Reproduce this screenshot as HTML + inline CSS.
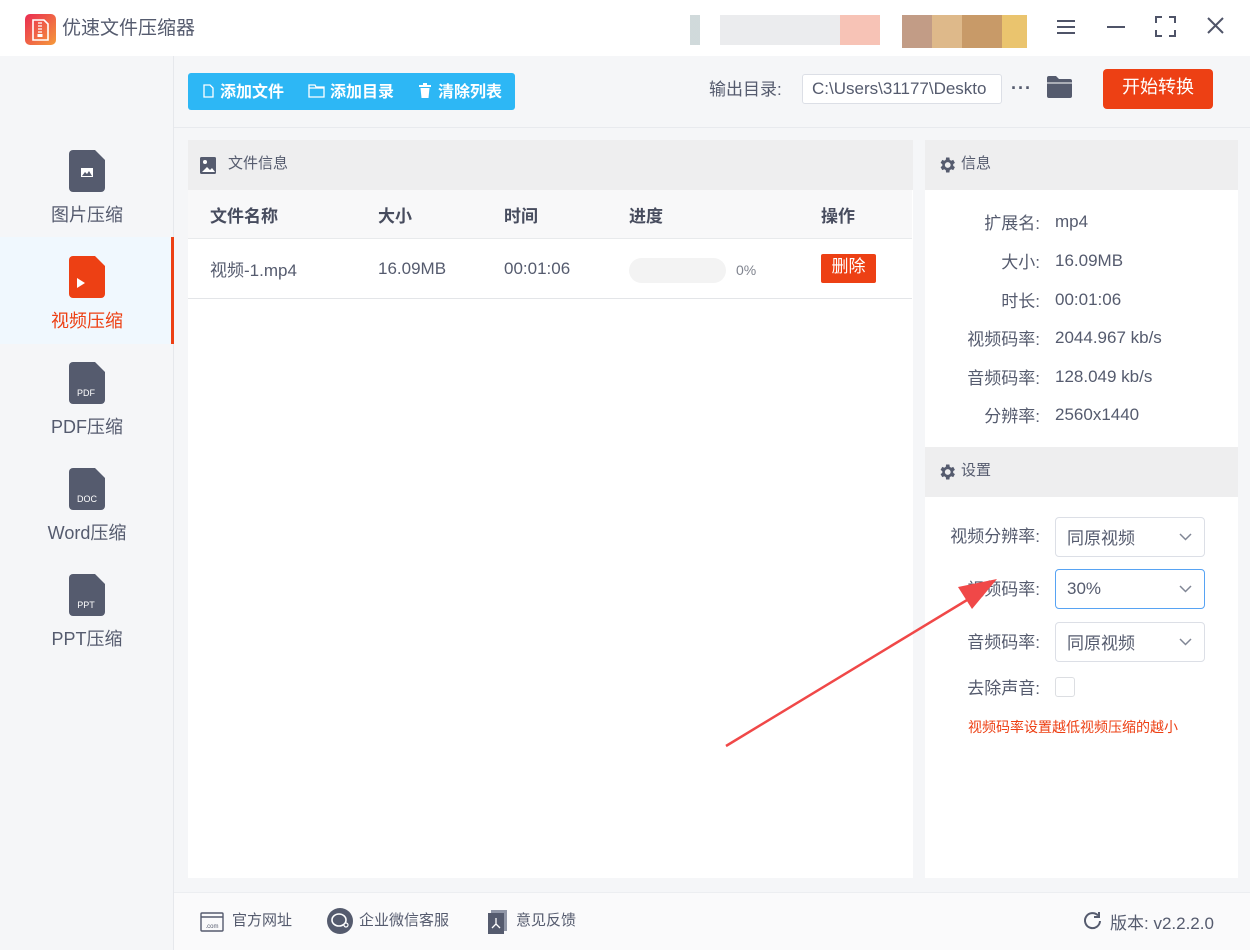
<!DOCTYPE html>
<html><head><meta charset="utf-8"><style>
*{margin:0;padding:0;box-sizing:border-box}
body{width:1250px;height:950px;position:relative;background:#f5f6f8;font-family:"Liberation Sans","Noto Sans CJK SC",sans-serif;color:#555b6e;overflow:hidden}
.a{position:absolute}
.t{font-size:17px;white-space:nowrap}
.c{margin-top:-3px}
.side .lbl{position:absolute;width:174px;text-align:center;font-size:18px;color:#555b6e;margin-top:-1px}
.fi{position:absolute;left:69px;width:36px;height:42px}
.lab{position:absolute;font-size:17px;text-align:right;width:120px;left:920px;margin-top:-3px}
.sel{position:absolute;left:1055px;width:150px;height:40px;border:1px solid #dcdfe6;border-radius:4px;background:#fff;font-size:17px;padding:9px 0 0 11px}
.sel.c2{padding-top:6px}
.sel svg{position:absolute;right:12px;top:15px}
</style></head><body>
<div class="a" style="left:0;top:0;width:1250px;height:56px;background:#fff"></div>
<div class="a" style="left:25px;top:14px;width:31px;height:31px;border-radius:5px;background:linear-gradient(135deg,#ea2c52,#f59a3a)"></div>
<svg class="a" style="left:31px;top:19px" width="19" height="22" viewBox="0 0 19 22"><path d="M2 1h11l4 4v16H2z" fill="none" stroke="#fff" stroke-width="1.6"/><path d="M7 4h4M7 7h4M7 10h4M7 13h4" stroke="#fff" stroke-width="1.3"/><rect x="6.5" y="15" width="5" height="3" fill="#fff"/></svg>
<div class="a t c" style="left:62px;top:16px;font-size:19px;color:#555b6e">优速文件压缩器</div>
<div class="a" style="left:690px;top:15px;width:190px;height:30px;background:linear-gradient(90deg,#c5d0d2 0 10px,#fff 10px 30px,#e6e7ea 30px 150px,#f5b4a4 150px 180px);opacity:.8"></div>
<div class="a" style="left:902px;top:15px;width:125px;height:33px;background:linear-gradient(90deg,#c29c86 0 30px,#deb98a 30px 60px,#c89a68 60px 100px,#eac46e 100px)"></div>
<svg class="a" style="left:1056px;top:18px" width="20" height="18"><path d="M1 3h18M1 9h18M1 15h18" stroke="#4f5468" stroke-width="2"/></svg>
<svg class="a" style="left:1106px;top:18px" width="20" height="18"><path d="M1 9h18" stroke="#4f5468" stroke-width="2"/></svg>
<svg class="a" style="left:1155px;top:16px" width="21" height="21" fill="none" stroke="#4f5468" stroke-width="2"><path d="M1 7V1h6M14 1h6v6M20 14v6h-6M7 20H1v-6"/></svg>
<svg class="a" style="left:1207px;top:17px" width="17" height="17"><path d="M1 1l15 15M16 1L1 16" stroke="#4f5468" stroke-width="2"/></svg>
<div class="a" style="left:173px;top:56px;width:1px;height:894px;background:#e6e8ec"></div>
<div class="side">
<svg class="fi" style="top:150px" viewBox="0 0 36 42"><path d="M4 0h22l10 10v28a4 4 0 0 1-4 4H4a4 4 0 0 1-4-4V4a4 4 0 0 1 4-4z" fill="#555b6e"/><rect x="12" y="18" width="12" height="9" fill="#fff"/><path d="M13 26l3-4 2 2 2-3 3 5z" fill="#555b6e"/></svg>
<div class="lbl" style="top:202px">图片压缩</div>
<div class="a" style="left:0;top:237px;width:172px;height:107px;background:#f0f8fe"></div>
<div class="a" style="left:171px;top:237px;width:3px;height:107px;background:#ed4014"></div>
<svg class="fi" style="top:256px" viewBox="0 0 36 42"><path d="M4 0h22l10 10v28a4 4 0 0 1-4 4H4a4 4 0 0 1-4-4V4a4 4 0 0 1 4-4z" fill="#ed4014"/><path d="M8 22v10l8-5z" fill="#fff"/></svg>
<div class="lbl" style="top:308px;color:#ed4014">视频压缩</div>
<svg class="fi" style="top:362px" viewBox="0 0 36 42"><path d="M4 0h22l10 10v28a4 4 0 0 1-4 4H4a4 4 0 0 1-4-4V4a4 4 0 0 1 4-4z" fill="#555b6e"/><text x="17" y="34" font-size="9" fill="#fff" text-anchor="middle" font-family="Liberation Sans">PDF</text></svg>
<div class="lbl" style="top:414px">PDF压缩</div>
<svg class="fi" style="top:468px" viewBox="0 0 36 42"><path d="M4 0h22l10 10v28a4 4 0 0 1-4 4H4a4 4 0 0 1-4-4V4a4 4 0 0 1 4-4z" fill="#555b6e"/><text x="18" y="34" font-size="9" fill="#fff" text-anchor="middle" font-family="Liberation Sans">DOC</text></svg>
<div class="lbl" style="top:520px">Word压缩</div>
<svg class="fi" style="top:574px" viewBox="0 0 36 42"><path d="M4 0h22l10 10v28a4 4 0 0 1-4 4H4a4 4 0 0 1-4-4V4a4 4 0 0 1 4-4z" fill="#555b6e"/><text x="17" y="34" font-size="9" fill="#fff" text-anchor="middle" font-family="Liberation Sans">PPT</text></svg>
<div class="lbl" style="top:626px">PPT压缩</div>
</div>
<div class="a" style="left:174px;top:127px;width:1076px;height:1px;background:#e8eaee"></div>
<div class="a" style="left:188px;top:73px;width:327px;height:37px;background:#2db7f5;border-radius:3px"></div>
<svg class="a" style="left:203px;top:84px" width="11" height="14" fill="none" stroke="#fff" stroke-width="1.3"><path d="M1 1h6l3 3v9H1z"/></svg>
<div class="a t" style="left:220px;top:78px;color:#fff;font-weight:bold;font-size:16px">添加文件</div>
<svg class="a" style="left:308px;top:84px" width="17" height="14" fill="none" stroke="#fff" stroke-width="1.3"><path d="M1 1h6l1 2h8v10H1z M1 4h15"/></svg>
<div class="a t" style="left:330px;top:78px;color:#fff;font-weight:bold;font-size:16px">添加目录</div>
<svg class="a" style="left:419px;top:83px" width="12" height="15" fill="#fff"><rect x="0" y="2" width="12" height="2"/><rect x="4" y="0" width="4" height="2"/><path d="M1.5 5h9l-1 10h-7z"/></svg>
<div class="a t" style="left:438px;top:78px;color:#fff;font-weight:bold;font-size:16px">清除列表</div>
<div class="a t c" style="left:709px;top:78px">输出目录:</div>
<div class="a" style="left:802px;top:74px;width:200px;height:30px;background:#fff;border:1px solid #dcdfe6;border-radius:3px;font-size:17px;padding:4px 0 0 9px;overflow:hidden;white-space:nowrap">C:\Users\31177\Deskto</div>
<div class="a" style="left:1011px;top:78px;font-size:18px;font-weight:bold;letter-spacing:1px">···</div>
<svg class="a" style="left:1047px;top:76px" width="25" height="22"><path d="M0 2a2 2 0 0 1 2-2h7l3 3h11a2 2 0 0 1 2 2v15a2 2 0 0 1-2 2H2a2 2 0 0 1-2-2z" fill="#555b6e"/><path d="M0 7h25" stroke="#fff" stroke-width="1"/></svg>
<div class="a" style="left:1103px;top:69px;width:110px;height:40px;background:#ed4014;border-radius:4px;color:#fff;font-size:18px;text-align:center;line-height:36px">开始转换</div>
<div class="a" style="left:188px;top:140px;width:725px;height:738px;background:#fff"></div>
<div class="a" style="left:188px;top:140px;width:725px;height:50px;background:#eeeeef"></div>
<svg class="a" style="left:200px;top:157px" width="16" height="17"><rect width="16" height="17" rx="1.5" fill="#555b6e"/><circle cx="5" cy="5" r="2" fill="#fff"/><path d="M2 15l5-5 3 3 2-2 3 4z" fill="#fff"/></svg>
<div class="a t c" style="left:228px;top:155px;font-size:15px">文件信息</div>
<div class="a" style="left:188px;top:190px;width:724px;height:49px;background:#f8f8f9;border-bottom:1px solid #e8eaec"></div>
<div class="a t c" style="left:210px;top:205px;font-weight:bold;color:#474c5e">文件名称</div>
<div class="a t c" style="left:378px;top:205px;font-weight:bold;color:#474c5e">大小</div>
<div class="a t c" style="left:504px;top:205px;font-weight:bold;color:#474c5e">时间</div>
<div class="a t c" style="left:629px;top:205px;font-weight:bold;color:#474c5e">进度</div>
<div class="a t c" style="left:821px;top:205px;font-weight:bold;color:#474c5e">操作</div>
<div class="a" style="left:188px;top:298px;width:724px;height:1px;background:#e3e5e8"></div>
<div class="a t c" style="left:210px;top:259px">视频-1.mp4</div>
<div class="a t" style="left:378px;top:259px">16.09MB</div>
<div class="a t" style="left:504px;top:259px">00:01:06</div>
<div class="a" style="left:629px;top:258px;width:97px;height:25px;background:#f3f3f3;border-radius:13px"></div>
<div class="a t" style="left:736px;top:262px;font-size:14px;color:#80848f">0%</div>
<div class="a" style="left:821px;top:254px;width:55px;height:29px;background:#ed4014;border-radius:2px;color:#fff;font-size:17px;text-align:center;line-height:26px">删除</div>
<div class="a" style="left:925px;top:140px;width:313px;height:738px;background:#fff"></div>
<div class="a" style="left:925px;top:140px;width:313px;height:50px;background:#eeeeef"></div>
<div class="a" style="left:925px;top:447px;width:313px;height:50px;background:#eeeeef"></div>
<svg class="a" style="left:937px;top:155px" width="20" height="20" viewBox="0 0 24 24"><path fill="#555b6e" d="M19.4 13a7.5 7.5 0 0 0 0-2l2.1-1.6-2-3.5-2.5 1a7 7 0 0 0-1.7-1L14.9 3h-4l-.4 2.9a7 7 0 0 0-1.7 1l-2.5-1-2 3.5L6.4 11a7.5 7.5 0 0 0 0 2l-2.1 1.6 2 3.5 2.5-1a7 7 0 0 0 1.7 1l.4 2.9h4l.4-2.9a7 7 0 0 0 1.7-1l2.5 1 2-3.5zM12.9 15.5a3.5 3.5 0 1 1 0-7 3.5 3.5 0 0 1 0 7z"/></svg>
<div class="a t c" style="left:961px;top:155px;font-size:15px">信息</div>
<svg class="a" style="left:937px;top:462px" width="20" height="20" viewBox="0 0 24 24"><path fill="#555b6e" d="M19.4 13a7.5 7.5 0 0 0 0-2l2.1-1.6-2-3.5-2.5 1a7 7 0 0 0-1.7-1L14.9 3h-4l-.4 2.9a7 7 0 0 0-1.7 1l-2.5-1-2 3.5L6.4 11a7.5 7.5 0 0 0 0 2l-2.1 1.6 2 3.5 2.5-1a7 7 0 0 0 1.7 1l.4 2.9h4l.4-2.9a7 7 0 0 0 1.7-1l2.5 1 2-3.5zM12.9 15.5a3.5 3.5 0 1 1 0-7 3.5 3.5 0 0 1 0 7z"/></svg>
<div class="a t c" style="left:961px;top:462px;font-size:15px">设置</div>
<div class="lab" style="top:212px">扩展名:</div><div class="a t" style="left:1055px;top:212px">mp4</div>
<div class="lab" style="top:251px">大小:</div><div class="a t" style="left:1055px;top:251px">16.09MB</div>
<div class="lab" style="top:290px">时长:</div><div class="a t" style="left:1055px;top:290px">00:01:06</div>
<div class="lab" style="top:328px">视频码率:</div><div class="a t" style="left:1055px;top:328px">2044.967 kb/s</div>
<div class="lab" style="top:367px">音频码率:</div><div class="a t" style="left:1055px;top:367px">128.049 kb/s</div>
<div class="lab" style="top:405px">分辨率:</div><div class="a t" style="left:1055px;top:405px">2560x1440</div>
<div class="lab" style="top:525px">视频分辨率:</div>
<div class="sel c2" style="top:517px">同原视频<svg width="13" height="8"><path d="M1 1l5.5 5.5L12 1" fill="none" stroke="#808695" stroke-width="1.5"/></svg></div>
<div class="lab" style="top:578px">视频码率:</div>
<div class="sel" style="top:569px;border-color:#57a3f3">30%<svg width="13" height="8"><path d="M1 1l5.5 5.5L12 1" fill="none" stroke="#808695" stroke-width="1.5"/></svg></div>
<div class="lab" style="top:631px">音频码率:</div>
<div class="sel c2" style="top:622px">同原视频<svg width="13" height="8"><path d="M1 1l5.5 5.5L12 1" fill="none" stroke="#808695" stroke-width="1.5"/></svg></div>
<div class="lab" style="top:677px">去除声音:</div>
<div class="a" style="left:1055px;top:677px;width:20px;height:20px;border:1px solid #dcdee2;border-radius:3px;background:#fff"></div>
<div class="a t c" style="left:968px;top:720px;font-size:14px;color:#ed4014">视频码率设置越低视频压缩的越小</div>
<svg class="a" style="left:0;top:0" width="1250" height="950"><path d="M726 746L972 597" stroke="#f04848" stroke-width="2.5"/><path d="M997 579L958 587l14 22z" fill="#f04848"/></svg>
<div class="a" style="left:174px;top:892px;width:1076px;height:58px;background:#fafafb;border-top:1px solid #eceef1"></div>
<svg class="a" style="left:200px;top:912px" width="24" height="20" fill="none" stroke="#555b6e" stroke-width="1.4"><rect x="1" y="1" width="22" height="18" rx="1"/><path d="M1 5h22"/><text x="12" y="16" font-size="6" fill="#555b6e" stroke="none" text-anchor="middle" font-family="Liberation Sans">.com</text></svg>
<div class="a t c" style="left:232px;top:912px;font-size:15px">官方网址</div>
<svg class="a" style="left:327px;top:908px" width="26" height="26"><circle cx="13" cy="13" r="13" fill="#555b6e"/><ellipse cx="12" cy="12" rx="7" ry="6" fill="none" stroke="#fff" stroke-width="1.6"/><circle cx="19" cy="17" r="2" fill="#555b6e" stroke="#fff" stroke-width="1.2"/></svg>
<div class="a t c" style="left:359px;top:912px;font-size:15px">企业微信客服</div>
<svg class="a" style="left:488px;top:910px" width="19" height="24"><rect x="3" y="0" width="16" height="21" fill="#9096a6"/><rect x="0" y="3" width="16" height="21" fill="#555b6e"/><path d="M8 8v6l-4 4M8 14l4 4" stroke="#fff" stroke-width="1.3" fill="none"/></svg>
<div class="a t c" style="left:516px;top:912px;font-size:15px">意见反馈</div>
<svg class="a" style="left:1083px;top:911px" width="19" height="19" fill="none" stroke="#555b6e" stroke-width="2"><path d="M15 4.5A7.5 7.5 0 1 0 17 10"/><path d="M16 1v5h-5" /></svg>
<div class="a t" style="left:1110px;top:909px;font-size:17px">版本: v2.2.2.0</div>
</body></html>
